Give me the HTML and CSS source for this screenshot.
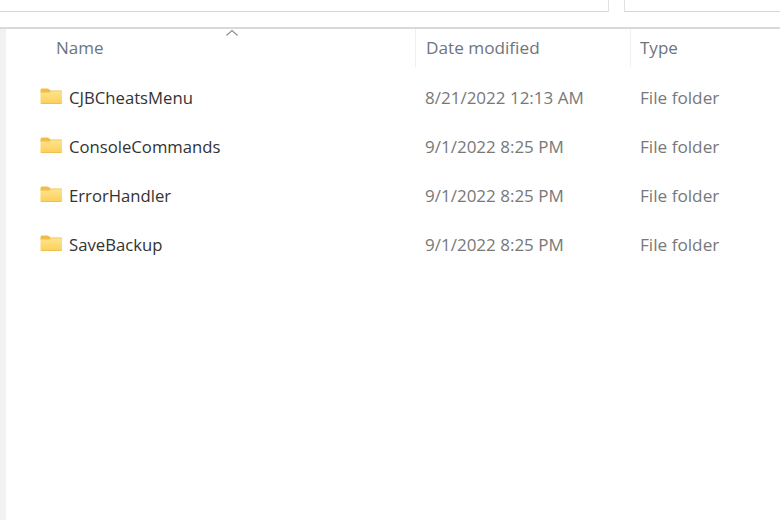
FILE: index.html
```html
<!DOCTYPE html>
<html lang="en">
<head>
<meta charset="utf-8">
<title>Mods</title>
<link rel="stylesheet" href="styles.css">
</head>
<body>
<div class="toolbar">
  <div class="field field-path"></div>
  <div class="field field-search"></div>
</div>
<div class="main">
  <div class="rail"></div>
  <div class="list">
    <div class="head">
      <div class="col col-name">Name
        <svg class="caret" width="14" height="8" viewBox="0 0 14 8"><path d="M1.5 6.5 7 1.5l5.5 5" fill="none" stroke="#8b9096" stroke-width="1.1"/></svg>
      </div>
      <div class="col col-date">Date modified</div>
      <div class="col col-type">Type</div>
    </div>
    <div class="row">
      <div class="name"><svg class="folder" width="23" height="18" viewBox="0 0 23 18"><use href="#folder"/></svg>CJBCheatsMenu</div>
      <div class="date">8/21/2022 12:13 AM</div>
      <div class="type">File folder</div>
    </div>
    <div class="row">
      <div class="name"><svg class="folder" width="23" height="18" viewBox="0 0 23 18"><use href="#folder"/></svg>ConsoleCommands</div>
      <div class="date">9/1/2022 8:25 PM</div>
      <div class="type">File folder</div>
    </div>
    <div class="row">
      <div class="name"><svg class="folder" width="23" height="18" viewBox="0 0 23 18"><use href="#folder"/></svg>ErrorHandler</div>
      <div class="date">9/1/2022 8:25 PM</div>
      <div class="type">File folder</div>
    </div>
    <div class="row">
      <div class="name"><svg class="folder" width="23" height="18" viewBox="0 0 23 18"><use href="#folder"/></svg>SaveBackup</div>
      <div class="date">9/1/2022 8:25 PM</div>
      <div class="type">File folder</div>
    </div>
  </div>
</div>
<svg class="defs" width="0" height="0" aria-hidden="true">
  <defs>
    <linearGradient id="fg" x1="0" y1="0" x2="0" y2="1">
      <stop offset="0" stop-color="#ffe38a"/>
      <stop offset="1" stop-color="#fad05c"/>
    </linearGradient>
    <symbol id="folder" viewBox="0 0 23 18">
      <path d="M0.5 3.2C0.5 2.2 1.2 1.5 2.2 1.5h5.2c.5 0 .9.2 1.3.5L10.5 3.5h10.7c.5 0 .8.4.8.8V6H.5z" fill="#f2bd45"/>
      <path d="M.5 5.5h9L11 4.2h10.2c.5 0 .8.4.8.8v10.7c0 .6-.4 1-1 1H1.5c-.6 0-1-.4-1-1z" fill="url(#fg)"/>
      <path d="M.5 16h21.5v-.4c0 .6-.4 1.1-1 1.1H1.5c-.6 0-1-.5-1-1.1z" fill="#eeb53f"/>
    </symbol>
  </defs>
</svg>
</body>
</html>
```
FILE: styles.css
```css
* { box-sizing: border-box; }
html, body { margin: 0; height: 100%; overflow: hidden; background: #fff; }
body {
  width: 780px;
  height: 520px;
  font-family: "Open Sans", "Noto Sans", sans-serif;
  font-size: 17px;
  display: flex;
  flex-direction: column;
}
.toolbar {
  height: 29px;
  flex: none;
  display: flex;
  gap: 15px;
  border-bottom: 2px solid #d9d9d9;
  align-items: flex-start;
}
.field { height: 12px; border-bottom: 1px solid #d6d6d6; }
.field-path { width: 609px; border-right: 1px solid #e2e2e2; }
.field-search { flex: 1; border-left: 1px solid #e2e2e2; }
.main { flex: 1; display: flex; }
.rail { width: 6px; background: #f2f2f2; }
.list { flex: 1; }
.head {
  height: 38px;
  display: grid;
  grid-template-columns: 410px 215px 1fr;
  color: #6d757d;
}
.col { position: relative; padding-top: 8px; line-height: 22px; border-right: 1px solid #f0f0f0; }
.col-name { padding-left: 50px; }
.col-date { padding-left: 10px; font-size: 17.2px; }
.col-type { padding-left: 9px; border-right: 0; }
.caret { position: absolute; left: 219px; top: 0; }
.row {
  height: 49px;
  display: grid;
  grid-template-columns: 410px 215px 1fr;
  align-items: center;
  color: #787878;
}
.head + .row { margin-top: 6px; }
.name { display: flex; align-items: center; padding-left: 34px; color: #333; gap: 6px; font-size: 16.7px; }
.folder { margin-top: -4px; }
.date { padding-left: 9px; }
.type { padding-left: 9px; font-size: 17.2px; }
.defs { position: absolute; }
```
